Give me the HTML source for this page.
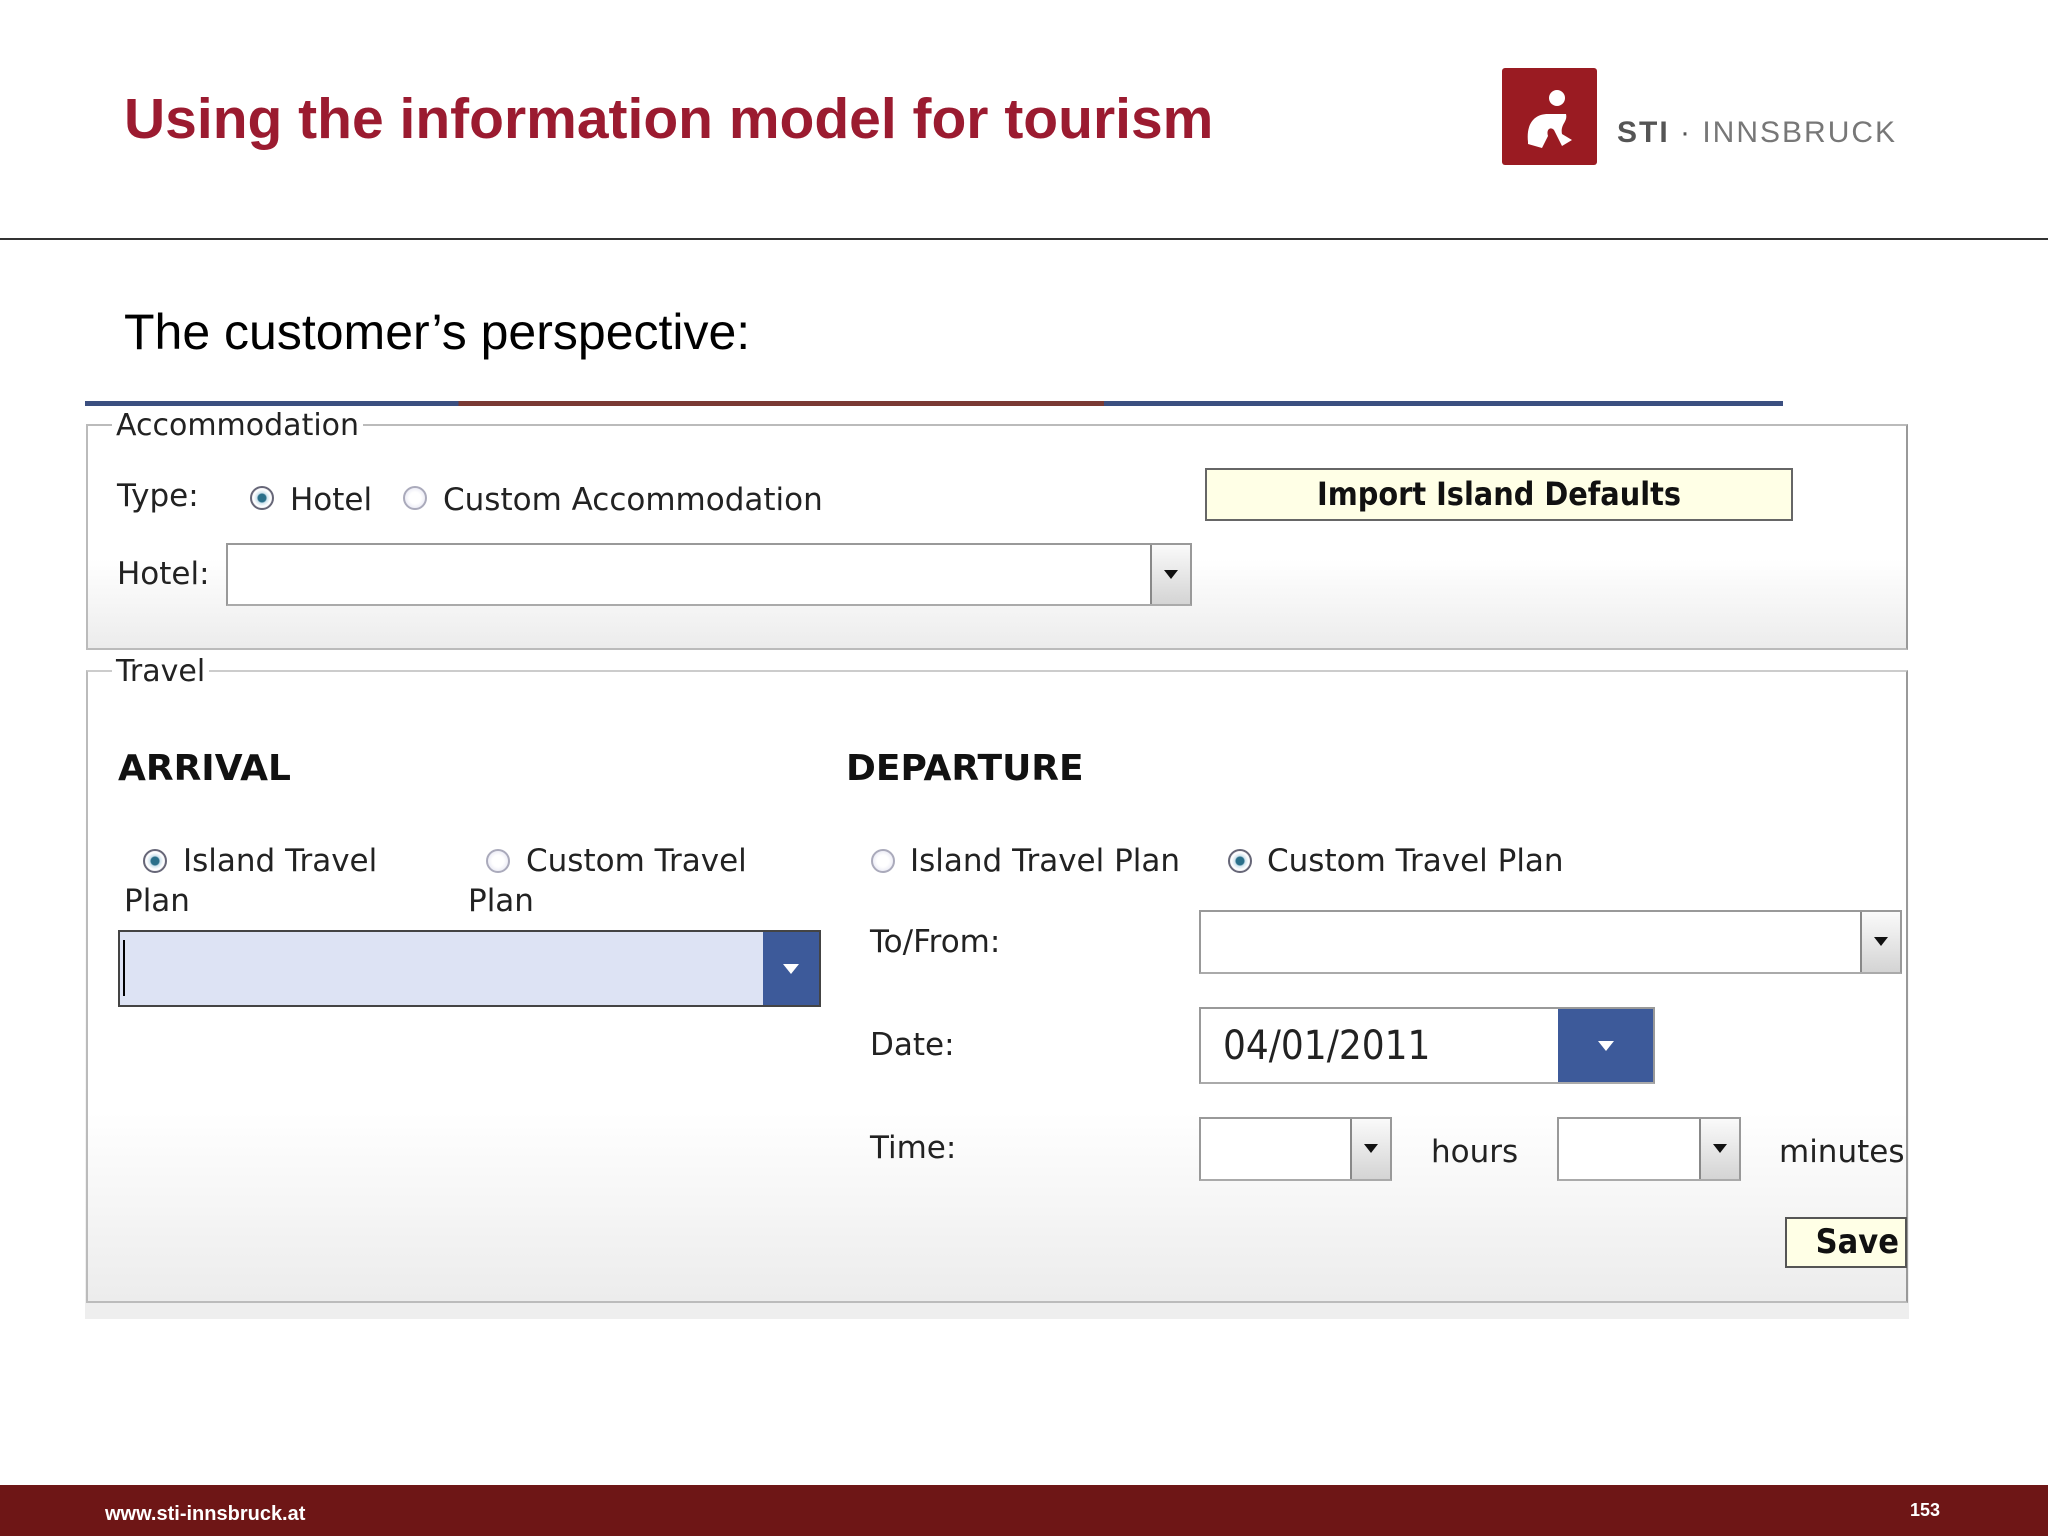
<!DOCTYPE html>
<html><head><meta charset="utf-8"><style>
*{margin:0;padding:0;box-sizing:border-box}
body{width:2048px;height:1536px;background:#fff;position:relative;overflow:hidden;font-family:"Liberation Sans",sans-serif}
.a{position:absolute;white-space:nowrap}
.f{font-family:"DejaVu Sans",sans-serif;font-size:31px;color:#222}
.rad{position:absolute;width:24px;height:24px;border-radius:50%;border:2px solid #aab;background:radial-gradient(circle,#fff 40%,#dde 100%)}
.rad.on{border-color:#667;background:radial-gradient(circle,#2a6f8a 0 28%,#cfe3ee 36%,#fff 60%,#ccd 100%)}
.sel{position:absolute;border:2px solid #999;border-bottom-color:#aaa;background:#fff}
.btn{position:absolute;top:0;bottom:0;right:0;width:40px;background:linear-gradient(#fafafa,#d4d4d4);border-left:2px solid #888}
.btn:after{content:"";position:absolute;left:50%;top:50%;margin:-5px 0 0 -7px;border-left:7px solid transparent;border-right:7px solid transparent;border-top:9px solid #111}
.bbtn{position:absolute;top:0;bottom:0;right:0;background:#3d5a9a}
.bbtn:after{content:"";position:absolute;left:50%;top:50%;margin:-5px 0 0 -8px;border-left:8px solid transparent;border-right:8px solid transparent;border-top:10px solid #fff}
</style></head><body>
<div class="a" style="left:124px;top:86px;font-size:57px;font-weight:bold;color:#9b1b30">Using the information model for tourism</div>
<div class="a" style="left:1502px;top:68px;width:95px;height:97px;background:#9a1b22;border-radius:3px">
<svg width="95" height="97" viewBox="0 0 95 97"><circle cx="55" cy="30" r="8" fill="#fff"/><path d="M26 74 C24 56 32 46 46 46 L64 46 C66 54 58 56 60 66 L70 72 L60 78 L52 62 C48 58 44 62 46 68 L40 80 L26 76 Z" fill="#fff"/></svg></div>
<div class="a" style="left:1617px;top:116px;font-size:30px;color:#555;letter-spacing:2px"><b>STI</b> · <span style="color:#777">INNSBRUCK</span></div>
<div class="a" style="left:0;top:238px;width:2048px;height:2px;background:#333"></div>
<div class="a" style="left:124px;top:303px;font-size:50px;color:#000">The customer’s perspective:</div>

<div class="a" style="left:85px;top:401px;width:1824px;height:918px;background:linear-gradient(#fff 0,#fff 40%,#f6f6f6 70%,#eee 100%)"></div>
<div class="a" style="left:85px;top:401px;width:1698px;height:5px;background:linear-gradient(90deg,#3b4f80 0 22%,#7a3a34 22% 60%,#3b4f80 60%)"></div>
<div class="a" style="left:86px;top:424px;width:1822px;height:226px;border:2px solid #bbb;border-right-color:#999;background:linear-gradient(#fff 60%,#ececec)"></div>
<div class="a f" style="left:112px;top:408px;background:#fff;padding:0 4px;font-size:30px">Accommodation</div>
<div class="a f" style="left:117px;top:478px">Type:</div>
<div class="rad on" style="left:250px;top:486px"></div>
<div class="a f" style="left:290px;top:482px">Hotel</div>
<div class="rad" style="left:403px;top:486px"></div>
<div class="a f" style="left:443px;top:482px">Custom Accommodation</div>
<div class="a" style="left:1205px;top:468px;width:588px;height:53px;border:2px solid #666;background:#ffffe6;text-align:center;font-family:'DejaVu Sans Condensed','DejaVu Sans',sans-serif;font-weight:bold;font-size:32px;line-height:48px;color:#111">Import Island Defaults</div>
<div class="a f" style="left:117px;top:556px">Hotel:</div>
<div class="sel" style="left:226px;top:543px;width:966px;height:63px"><div class="btn"></div></div>
<div class="a" style="left:86px;top:670px;width:1822px;height:633px;border:2px solid #bbb;border-right-color:#999;border-top-color:#ccc;background:linear-gradient(#fff 70%,#ececec)"></div>
<div class="a f" style="left:112px;top:654px;background:#fff;padding:0 4px;font-size:30px">Travel</div>
<div class="a f" style="left:118px;top:748px;font-weight:bold;font-size:36px;color:#111">ARRIVAL</div>
<div class="a f" style="left:846px;top:748px;font-weight:bold;font-size:36px;color:#111">DEPARTURE</div>
<div class="rad on" style="left:143px;top:849px"></div>
<div class="a f" style="left:183px;top:843px">Island Travel</div>
<div class="a f" style="left:124px;top:883px">Plan</div>
<div class="rad" style="left:486px;top:849px"></div>
<div class="a f" style="left:526px;top:843px">Custom Travel</div>
<div class="a f" style="left:468px;top:883px">Plan</div>
<div class="a" style="left:118px;top:930px;width:703px;height:77px;border:2px solid #444;background:#dde3f4"><div style="position:absolute;left:3px;top:8px;width:2px;height:56px;background:#000"></div><div class="bbtn" style="width:56px"></div></div>
<div class="rad" style="left:871px;top:849px"></div>
<div class="a f" style="left:910px;top:843px">Island Travel Plan</div>
<div class="rad on" style="left:1228px;top:849px"></div>
<div class="a f" style="left:1267px;top:843px">Custom Travel Plan</div>
<div class="a f" style="left:870px;top:924px">To/From:</div>
<div class="sel" style="left:1199px;top:910px;width:703px;height:64px"><div class="btn"></div></div>
<div class="a f" style="left:870px;top:1027px">Date:</div>
<div class="sel" style="left:1199px;top:1007px;width:456px;height:77px"><div class="a" style="left:22px;top:14px;font-family:'DejaVu Sans Condensed','DejaVu Sans',sans-serif;font-size:40px;color:#222">04/01/2011</div><div class="bbtn" style="width:95px"></div></div>
<div class="a f" style="left:870px;top:1130px">Time:</div>
<div class="sel" style="left:1199px;top:1117px;width:193px;height:64px"><div class="btn"></div></div>
<div class="a f" style="left:1431px;top:1134px">hours</div>
<div class="sel" style="left:1557px;top:1117px;width:184px;height:64px"><div class="btn"></div></div>
<div class="a f" style="left:1779px;top:1134px">minutes</div>
<div class="a" style="left:1785px;top:1217px;width:122px;height:51px;border:2px solid #555;background:#ffffe6;text-align:right;padding-right:6px;font-family:'DejaVu Sans Condensed','DejaVu Sans',sans-serif;font-weight:bold;font-size:34px;line-height:46px;color:#111">Save</div>

<div class="a" style="left:0;top:1485px;width:2048px;height:51px;background:#6e1616"></div>
<div class="a" style="left:105px;top:1503px;font-size:20px;font-weight:bold;color:#fff">www.sti-innsbruck.at</div>
<div class="a" style="left:1910px;top:1500px;font-size:18px;font-weight:bold;color:#fff">153</div>
</body></html>
